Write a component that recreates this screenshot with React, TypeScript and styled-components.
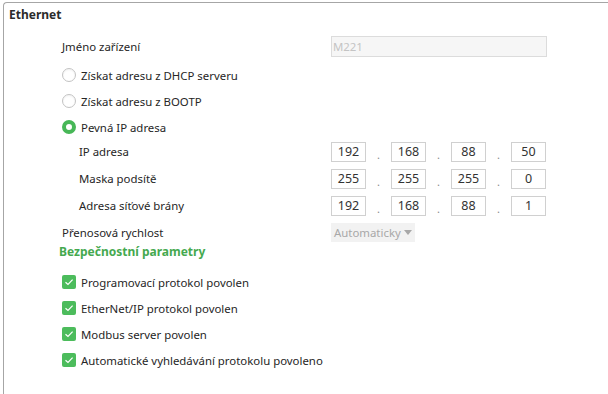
import React from 'react'
import styled, { createGlobalStyle } from 'styled-components'

const Global = createGlobalStyle`
    html, body {
        margin: 0;
        padding: 0;
        background: #fff;
        overflow: hidden;
    }
    body {
        font-family: "Noto Sans", "Open Sans", sans-serif;
        font-size: 11.4px;
        color: #262626;
    }
`

const Panel = styled.div`
    margin: 2px 0 0 3px;
    width: calc(100vw - 3px);
    height: 392px;
    border-top: 1px solid #a6a6a6;
    border-left: 1px solid #a6a6a6;
    border-top-left-radius: 4px;
    box-sizing: border-box;
`

const Title = styled.div`
    height: 23px;
    line-height: 23px;
    padding-left: 5px;
    font-size: 12px;
    font-weight: 700;
    color: #2b2b2b;
`

const Body = styled.div`
    padding-left: 58px;
    display: flex;
    flex-direction: column;
`

const Row = styled.div<{ $h?: number; $mt?: number; $indent?: number }>`
    display: grid;
    grid-template-columns: 269px auto;
    align-items: center;
    height: ${p => p.$h ?? 26}px;
    margin-top: ${p => p.$mt ?? 0}px;
    & > :first-child {
        padding-left: ${p => p.$indent ?? 0}px;
    }
`

const Label = styled.span`
    white-space: nowrap;
`

const TextBox = styled.div`
    width: 216px;
    height: 21px;
    box-sizing: border-box;
    border: 1px solid #dcdcdc;
    background: #f6f6f6;
    color: #c4c4c4;
    line-height: 19px;
    padding-left: 1px;
`

const Group = styled.div<{ $mt?: number }>`
    display: flex;
    flex-direction: column;
    margin-top: ${p => p.$mt ?? 0}px;
`

const Choice = styled.label`
    display: flex;
    align-items: center;
    gap: 5px;
    height: 26px;
    white-space: nowrap;
`

const Radio = styled.span<{ $on?: boolean }>`
    width: 14px;
    height: 14px;
    box-sizing: border-box;
    border-radius: 50%;
    background: #fff;
    border: ${p => (p.$on ? '4px solid #47b757' : '1px solid #c3c3c3')};
    box-shadow: ${p => (p.$on ? 'none' : 'inset 0 1px 2px rgba(0,0,0,0.06)')};
`

const Check = styled.span`
    width: 14px;
    height: 14px;
    border-radius: 2px;
    background: #4cbc5c;
    display: flex;
    align-items: center;
    justify-content: center;
`

const IpGroup = styled.div`
    display: flex;
    align-items: center;
`

const Octet = styled.div`
    width: 35px;
    height: 20px;
    box-sizing: border-box;
    border: 1px solid #d0d0d0;
    text-align: center;
    line-height: 18px;
    font-size: 12.5px;
    color: #333;
`

const Dot = styled.span`
    width: 25px;
    text-align: center;
    color: #8a8a8a;
    font-size: 11px;
    padding-top: 6px;
`

const Select = styled.div`
    width: 84px;
    height: 19px;
    box-sizing: border-box;
    background: #f2f2f2;
    color: #a8a8a8;
    display: flex;
    align-items: center;
    padding-left: 3px;
    gap: 3px;
`

const Caret = styled.span`
    width: 0;
    height: 0;
    border-left: 4px solid transparent;
    border-right: 4px solid transparent;
    border-top: 5px solid #a8a8a8;
    margin-top: 1px;
`

const Section = styled.div`
    height: 16px;
    line-height: 16px;
    margin-left: -3px;
    font-size: 12px;
    font-weight: 700;
    color: #45a94f;
`

const Tick = () => (
    <svg width="10" height="10" viewBox="0 0 10 10">
        <path d="M1.5 5.2 L4 7.5 L8.6 2.6" fill="none" stroke="#fff" strokeWidth="1.2" />
    </svg>
)

const IpField = ({ parts }: { parts: string[] }) => (
    <IpGroup>
        {parts.map((p, i) => (
            <React.Fragment key={i}>
                {i > 0 && <Dot>.</Dot>}
                <Octet>{p}</Octet>
            </React.Fragment>
        ))}
    </IpGroup>
)

const ipRows = [
    { label: 'IP adresa', parts: ['192', '168', '88', '50'] },
    { label: 'Maska podsítě', parts: ['255', '255', '255', '0'] },
    { label: 'Adresa síťové brány', parts: ['192', '168', '88', '1'] },
]

const radios = [
    { label: 'Získat adresu z DHCP serveru', on: false },
    { label: 'Získat adresu z BOOTP', on: false },
    { label: 'Pevná IP adresa', on: true },
]

const checks = [
    'Programovací protokol povolen',
    'EtherNet/IP protokol povolen',
    'Modbus server povolen',
    'Automatické vyhledávání protokolu povoleno',
]

const App: React.FC = () => {
    return (
        <>
            <Global />
            <Panel>
                <Title>Ethernet</Title>
                <Body>
                    <Row $mt={7}>
                        <Label>Jméno zařízení</Label>
                        <TextBox>M221</TextBox>
                    </Row>
                    <Group $mt={3}>
                        {radios.map(r => (
                            <Choice key={r.label}>
                                <Radio $on={r.on} />
                                {r.label}
                            </Choice>
                        ))}
                    </Group>
                    {ipRows.map((r, i) => (
                        <Row key={r.label} $h={27} $mt={i === 0 ? -2 : 0} $indent={17}>
                            <Label>{r.label}</Label>
                            <IpField parts={r.parts} />
                        </Row>
                    ))}
                    <Row $h={24} $mt={1}>
                        <Label>Přenosová rychlost</Label>
                        <Select>
                            Automaticky
                            <Caret />
                        </Select>
                    </Row>
                    <Section>Bezpečnostní parametry</Section>
                    <Group $mt={9}>
                        {checks.map(c => (
                            <Choice key={c}>
                                <Check>
                                    <Tick />
                                </Check>
                                {c}
                            </Choice>
                        ))}
                    </Group>
                </Body>
            </Panel>
        </>
    )
}

export default App
